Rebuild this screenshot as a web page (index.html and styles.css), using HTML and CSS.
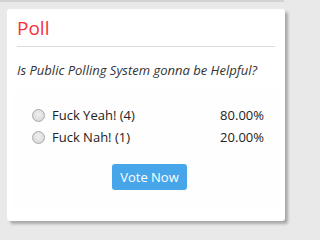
FILE: index.html
```html
<!DOCTYPE html>
<html>
<head>
<meta charset="utf-8">
<link rel="stylesheet" href="styles.css">
</head>
<body>
<div class="prev"></div>
<div class="card">
  <h2 class="title">Poll</h2>
  <hr class="rule">
  <p class="question">Is Public Polling System gonna be Helpful?</p>
  <div class="panel">
    <label class="option">
      <span class="radio"></span>
      <span class="label">Fuck Yeah! (4)</span>
      <span class="pct">80.00%</span>
    </label>
    <label class="option">
      <span class="radio"></span>
      <span class="label">Fuck Nah! (1)</span>
      <span class="pct">20.00%</span>
    </label>
    <div class="actions">
      <button class="vote">Vote Now</button>
    </div>
  </div>
</div>
</body>
</html>
```
FILE: styles.css
```css
html, body {
  margin: 0;
  padding: 0;
}
body {
  background: #e9e9e9;
  font-family: "Open Sans", "Noto Sans", sans-serif;
  color: #333;
  width: 293px;
  height: 228px;
  overflow: hidden;
}
.prev {
  width: 284px;
  height: 2px;
  background: #d2d2d2;
}
.card {
  margin: 7px 0 0 7px;
  width: 278px;
  height: 212px;
  box-sizing: border-box;
  background: #fff;
  border-radius: 3px;
  box-shadow: 3px 3px 3px rgba(0, 0, 0, 0.28);
  padding: 0 10px;
}
.title {
  margin: 0;
  padding-top: 7px;
  font-weight: 400;
  font-size: 19px;
  line-height: 24px;
  color: #f5323a;
}
.rule {
  margin: 6px 0 0;
  border: 0;
  border-top: 1px solid #dcdcdc;
}
.question {
  margin: 14px 0 0;
  font-style: italic;
  font-size: 13px;
  line-height: 18px;
  color: #333;
}
.panel {
  margin: 12px -3px 0 -3px;
  background: #fefefe;
  box-shadow: 0 0 1px rgba(0, 0, 0, 0.04);
  padding: 13px 14px 18px 18px;
}
.option {
  display: flex;
  align-items: center;
  height: 22px;
  font-size: 13px;
  color: #222;
}
.radio {
  width: 11px;
  height: 11px;
  border: 1px solid #a8a8a8;
  border-radius: 50%;
  background: radial-gradient(circle at 50% 40%, #f0f0f0 0%, #dcdcdc 70%, #cfcfcf 100%);
  margin-right: 7px;
  flex: none;
}
.label {
  flex: 1;
}
.pct {
  flex: none;
}
.actions {
  display: flex;
  justify-content: center;
  margin-top: 16px;
  padding-left: 3px;
}
.vote {
  width: 75px;
  height: 26px;
  border: 0;
  border-radius: 3px;
  background: #47a6ea;
  color: #fff;
  font-family: "Open Sans", "Noto Sans", sans-serif;
  font-size: 13px;
  padding: 0;
}
```
